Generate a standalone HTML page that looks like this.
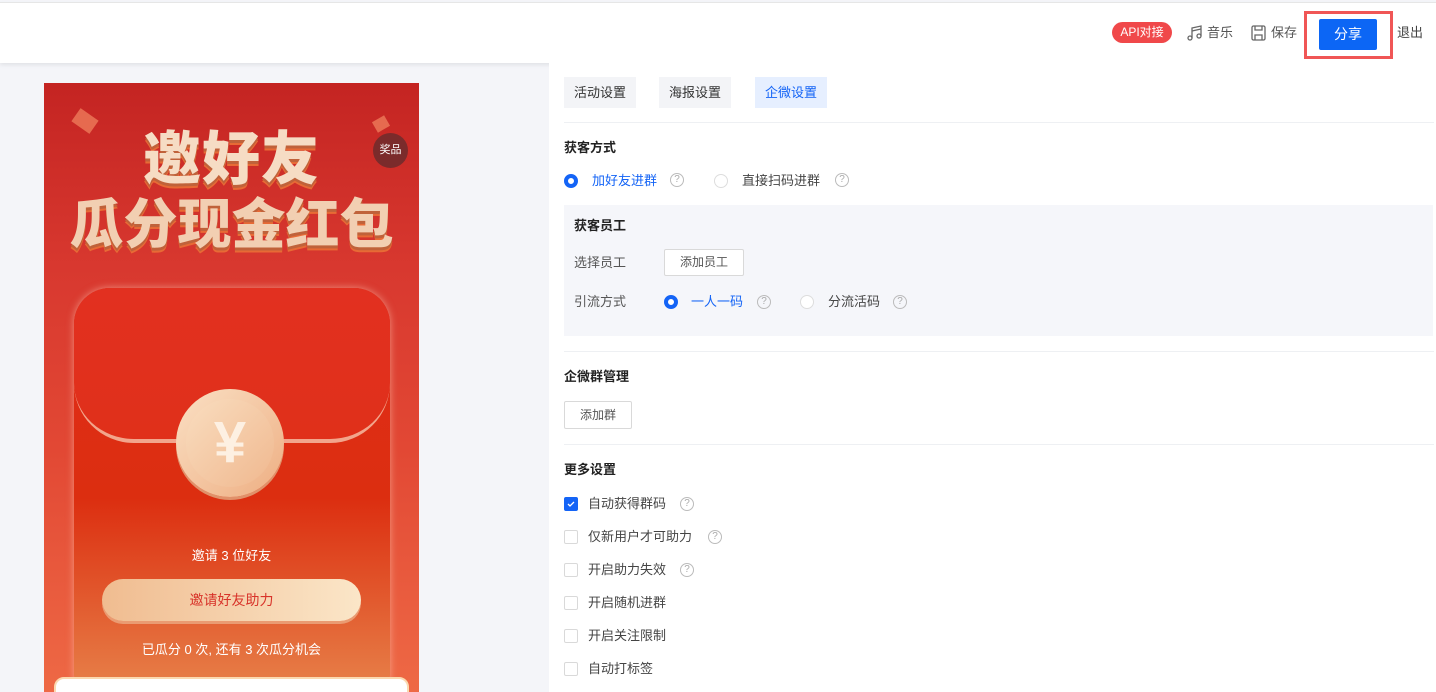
<!DOCTYPE html>
<html><head><meta charset="utf-8"><style>
*{margin:0;padding:0;box-sizing:border-box}
body{width:1436px;height:692px;overflow:hidden;background:#f4f5f9;font-family:"Liberation Sans","Noto Sans CJK SC",sans-serif;font-size:13px;color:#333;position:relative}
.top{position:absolute;left:0;top:2px;width:1436px;height:61px;background:#fff;border-top:1px solid #e6e6e6;box-shadow:0 2px 4px rgba(0,0,0,.08)}
.abs{position:absolute}
.right{position:absolute;left:549px;top:63px;width:887px;height:629px;background:#fff}
.tab{position:absolute;top:14px;height:31px;line-height:31px;padding:0 10px;background:#f3f4f7;font-size:13px;color:#333}
.h{position:absolute;left:15px;font-weight:bold;font-size:13px;color:#222;line-height:16px}
.line{position:absolute;left:15px;right:2px;height:1px;background:#eef0f3}
.radio{position:absolute;width:14px;height:14px;border-radius:50%;border:1px solid #ddd;background:#fff}
.radio.on{border:4px solid #1464f6}
.q{position:absolute;width:14px;height:14px;border-radius:50%;border:1px solid #bbb;color:#aaa;font-size:10px;line-height:12px;text-align:center}
.t{position:absolute;font-size:13px;white-space:nowrap;line-height:16px}
.btn{position:absolute;border:1px solid #d9d9d9;border-radius:2px;background:#fff;font-size:12px;color:#555;text-align:center}
.cb{position:absolute;left:15px;width:14px;height:14px;border:1px solid #d9d9d9;border-radius:2px;background:#fff}
</style></head><body>
<div class="top">
 <div class="abs" style="left:1112px;top:19px;width:60px;height:21px;border-radius:11px;background:#f0484a;color:#fff;font-size:12px;line-height:21px;text-align:center">API对接</div>
 <svg class="abs" style="left:1186px;top:22px" width="17" height="17" viewBox="0 0 17 17" fill="none" stroke="#666" stroke-width="1.3"><path d="M6 13V3l9-2v10"/><circle cx="4" cy="13" r="2"/><circle cx="13" cy="11" r="2"/><path d="M6 6l9-2"/></svg>
 <div class="t" style="left:1207px;top:22px;color:#555">音乐</div>
 <svg class="abs" style="left:1251px;top:22px" width="15" height="16" viewBox="0 0 15 16" fill="none" stroke="#666" stroke-width="1.3"><rect x="1" y="1" width="13" height="14" rx="1.5"/><path d="M4 1v4h7V1M4 15v-5h7v5"/></svg>
 <div class="t" style="left:1271px;top:22px;color:#555">保存</div>
 <div class="abs" style="left:1304px;top:8px;width:89px;height:48px;border:3px solid #f05656"></div>
 <div class="abs" style="left:1319px;top:16px;width:58px;height:31px;background:#0c66f5;color:#fff;font-size:14px;line-height:31px;text-align:center;border-radius:2px">分享</div>
 <div class="t" style="left:1397px;top:22px;color:#444">退出</div>
</div>

<div class="abs" style="left:44px;top:83px;width:375px;height:609px;overflow:hidden;background:linear-gradient(180deg,#c42422 0%,#d8382f 30%,#e24834 60%,#ee6945 100%)">
 <div class="abs" style="left:30px;top:30px;width:22px;height:16px;background:#ee7a5a;transform:rotate(35deg);opacity:.8"></div>
 <div class="abs" style="left:330px;top:35px;width:14px;height:12px;background:#ee7a5a;transform:rotate(-30deg);opacity:.8"></div>
 <div class="abs" style="left:329px;top:50px;width:35px;height:35px;border-radius:50%;background:#7b2b2b;color:#fff;font-size:11px;line-height:35px;text-align:center">奖品</div>
 <div class="abs" style="left:0;top:45px;width:375px;text-align:center;font-size:58px;font-weight:900;color:#f6dcc4;letter-spacing:1px;text-shadow:0 3px 0 #c0623a,0 5px 0 #e86a35;line-height:64px">邀好友</div>
 <div class="abs" style="left:0;top:110px;width:375px;text-align:center;font-size:54px;font-weight:900;color:#f2cfb2;text-shadow:0 3px 0 #c0623a,0 5px 0 #e86a35;line-height:64px">瓜分现金红包</div>
 <div class="abs" style="left:30px;top:205px;width:316px;height:420px;border-radius:36px;background:linear-gradient(180deg,#e02c1a 0%,#dc2e10 50%,#e8884e 100%);box-shadow:0 0 8px rgba(255,200,180,.6)"></div>
 <div class="abs" style="left:30px;top:205px;width:316px;height:155px;border-radius:36px 36px 60px 60px;background:linear-gradient(180deg,#e23020,#e0301a);border-bottom:4px solid #f2a58c"></div>
 <div class="abs" style="left:132px;top:306px;width:108px;height:108px;border-radius:50%;background:linear-gradient(135deg,#fae0c4,#eeae82);box-shadow:0 3px 0 #e0916a"></div>
 <div class="abs" style="left:142px;top:316px;width:88px;height:88px;border-radius:50%;background:linear-gradient(135deg,#f9ddbf,#f0b88f);color:#fdf0e2;font-size:58px;line-height:88px;text-align:center;font-weight:bold">¥</div>
 <div class="abs" style="left:0;top:462px;width:375px;text-align:center;color:#fff;font-size:13px">邀请 3 位好友</div>
 <div class="abs" style="left:58px;top:496px;width:259px;height:42px;border-radius:21px;background:linear-gradient(90deg,#f0bc90,#fbe6c8);box-shadow:0 3px 0 #ea9b72;color:#d8332a;font-size:14px;line-height:42px;text-align:center">邀请好友助力</div>
 <div class="abs" style="left:0;top:556px;width:375px;text-align:center;color:#fff;font-size:13px">已瓜分 0 次, 还有 3 次瓜分机会</div>
 <div class="abs" style="left:10px;top:594px;width:355px;height:40px;border-radius:10px;background:#fff;border:2px solid #fbd9b0"></div>
</div>

<div class="right">
 <div class="tab" style="left:15px">活动设置</div>
 <div class="tab" style="left:110px">海报设置</div>
 <div class="tab" style="left:206px;background:#e6efff;color:#1464f6">企微设置</div>
 <div class="line" style="top:59px"></div>
 <div class="h" style="top:77px">获客方式</div>
 <div class="radio on" style="left:15px;top:111px"></div>
 <div class="t" style="left:43px;top:110px;color:#1464f6">加好友进群</div>
 <div class="q" style="left:121px;top:110px">?</div>
 <div class="radio" style="left:165px;top:111px"></div>
 <div class="t" style="left:193px;top:110px;color:#444">直接扫码进群</div>
 <div class="q" style="left:286px;top:110px">?</div>
 <div class="abs" style="left:15px;top:142px;width:869px;height:131px;background:#f5f6fa"></div>
 <div class="h" style="left:25px;top:155px">获客员工</div>
 <div class="t" style="left:25px;top:192px;color:#555">选择员工</div>
 <div class="btn" style="left:115px;top:186px;width:80px;height:27px;line-height:25px">添加员工</div>
 <div class="t" style="left:25px;top:231px;color:#555">引流方式</div>
 <div class="radio on" style="left:115px;top:232px"></div>
 <div class="t" style="left:142px;top:231px;color:#1464f6">一人一码</div>
 <div class="q" style="left:208px;top:232px">?</div>
 <div class="radio" style="left:251px;top:232px"></div>
 <div class="t" style="left:279px;top:231px;color:#444">分流活码</div>
 <div class="q" style="left:344px;top:232px">?</div>
 <div class="line" style="top:288px"></div>
 <div class="h" style="top:306px">企微群管理</div>
 <div class="btn" style="left:15px;top:338px;width:68px;height:28px;line-height:26px">添加群</div>
 <div class="line" style="top:381px"></div>
 <div class="h" style="top:399px">更多设置</div>
 <div class="cb" style="top:434px;background:#1464f6;border-color:#1464f6"><svg width="12" height="12" viewBox="0 0 12 12" style="position:absolute;left:0;top:0"><path d="M3 6l2 2 4-4" fill="none" stroke="#fff" stroke-width="1.3"/></svg></div>
 <div class="t" style="left:39px;top:433px;color:#444">自动获得群码</div>
 <div class="q" style="left:131px;top:434px">?</div>
 <div class="cb" style="top:467px"></div>
 <div class="t" style="left:39px;top:466px;color:#444">仅新用户才可助力</div>
 <div class="q" style="left:159px;top:467px">?</div>
 <div class="cb" style="top:500px"></div>
 <div class="t" style="left:39px;top:499px;color:#444">开启助力失效</div>
 <div class="q" style="left:131px;top:500px">?</div>
 <div class="cb" style="top:533px"></div>
 <div class="t" style="left:39px;top:532px;color:#444">开启随机进群</div>
 <div class="cb" style="top:566px"></div>
 <div class="t" style="left:39px;top:565px;color:#444">开启关注限制</div>
 <div class="cb" style="top:599px"></div>
 <div class="t" style="left:39px;top:598px;color:#444">自动打标签</div>
</div>
</body></html>
